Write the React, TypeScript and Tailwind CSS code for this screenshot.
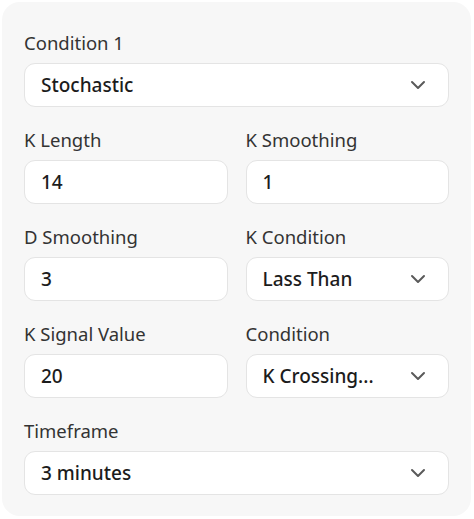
import React from "react";

const Chevron = () => (
  <svg width="16" height="10" viewBox="0 0 16 10" fill="none" className="shrink-0">
    <path d="M2 2l6 6 6-6" stroke="#5a5a5a" strokeWidth="2" strokeLinecap="round" strokeLinejoin="round" />
  </svg>
);

const Label = ({ children }: { children: React.ReactNode }) => (
  <div className="text-[18.5px] leading-[24px] text-[#333333] mb-[8px]">{children}</div>
);

const Input = ({ value }: { value: string }) => (
  <div className="h-[44px] rounded-[11px] border border-[#e4e4e4] bg-white flex items-center pl-[16px] pr-[22px] text-[19px] font-medium text-[#1c1c1c]">
    {value}
  </div>
);

const Select = ({ value }: { value: string }) => (
  <div className="h-[44px] rounded-[11px] border border-[#e4e4e4] bg-white flex items-center justify-between pl-[16px] pr-[22px] text-[19px] font-medium text-[#1c1c1c]">
    <span>{value}</span>
    <Chevron />
  </div>
);

const Field = ({ label, children }: { label: string; children: React.ReactNode }) => (
  <div className="flex flex-col">
    <Label>{label}</Label>
    {children}
  </div>
);

export default function App() {
  return (
    <div className="w-[474px] h-[519px] bg-white p-[2px]" style={{ fontFamily: '"Noto Sans", sans-serif' }}>
      <div className="w-[469px] h-[514px] rounded-[18px] bg-[#f7f7f7] pt-[29px] px-[22px] flex flex-col gap-[21px]">
        <Field label="Condition 1">
          <Select value="Stochastic" />
        </Field>
        <div className="grid grid-cols-2 gap-x-[18px] gap-y-[21px]">
          <Field label="K Length"><Input value="14" /></Field>
          <Field label="K Smoothing"><Input value="1" /></Field>
          <Field label="D Smoothing"><Input value="3" /></Field>
          <Field label="K Condition"><Select value="Lass Than" /></Field>
          <Field label="K Signal Value"><Input value="20" /></Field>
          <Field label="Condition"><Select value="K Crossing..." /></Field>
        </div>
        <Field label="Timeframe">
          <Select value="3 minutes" />
        </Field>
      </div>
    </div>
  );
}
